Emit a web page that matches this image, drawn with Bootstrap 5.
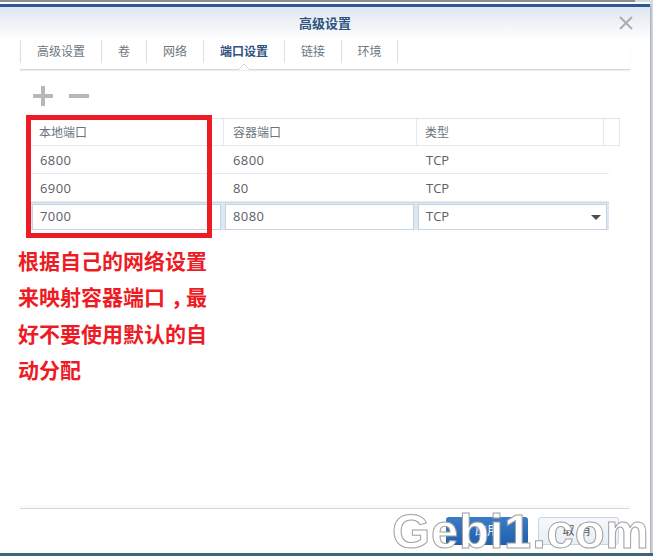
<!DOCTYPE html>
<html lang="zh">
<head>
<meta charset="utf-8">
<link href="https://cdn.jsdelivr.net/npm/bootstrap@5.3.0/dist/css/bootstrap.min.css" rel="stylesheet">
<style>
html,body{height:100%;}
body{margin:0;width:653px;height:556px;overflow:hidden;background:#d5dbe3;font-family:"Liberation Sans","Noto Sans CJK SC",sans-serif;font-size:12px;color:#505a64;position:relative;}
.top-edge{height:2px;background:#8a8d90;width:635px;}
.top-gap{height:2px;background:#fff;width:650px;}
.dlg{width:650px;height:549px;background:#fff;border-top:3px solid #2d5a8e;box-shadow:1px 1px 2px rgba(0,0,0,.25);}
.dlg-head{height:33px;background:linear-gradient(#dfe6f0,#fff);}
.dlg-title{font-size:13px;font-weight:700;color:#2f5380;padding-top:7px;}
.dlg-close{position:absolute;left:619px;top:16px;}
.tabbar{margin:0 20px;height:30px;border-bottom:1px solid #d5d8da;box-shadow:0 1px 1px #eee;position:relative;width:610px;}
.tabitem{height:23px;line-height:25px;text-align:center;border-left:1px solid #d7e1eb;color:#6c7680;font-size:12px;}
.tabitem.last{border-right:1px solid #d7e1eb;}
.tabitem.on{font-weight:700;color:#2f5380;}
.tab-notch{position:absolute;left:218px;bottom:-1px;width:12px;height:7px;}
.toolrow{margin:16px 0 0 33px;height:20px;gap:16px;}
.grid{margin:12px 0 0 28px;width:592px;}
.grow{height:28px;border-bottom:1px solid #e4ebf2;}
.grow.hd{height:28px;border-top:1px solid #dce4ec;}
.gcell{line-height:29px;color:#5a6068;font-family:"Open Sans","Noto Sans CJK SC",sans-serif;font-size:13px;}
.hd .gcell{border-right:1px solid #e2e9f0;font-family:"Liberation Sans","Noto Sans CJK SC",sans-serif;font-size:12px;line-height:28px;color:#6a7480;}
.num{letter-spacing:.4px;}
.c1{width:196px;padding-left:12px;}.c2{width:193px;padding-left:9px;}.c3{width:187px;padding-left:9px;}.c4{width:16px;}
.hd .c1{padding-left:11px;}.hd .c3{padding-left:8px;}
.edit-row{width:581px;height:28px;background:#d9e7f6;padding:1px 2px 1px 4px;gap:4px;border-top:1px solid #d0dae4;}
.edit-box{background:#fff;border:1px solid #c9d3de;height:26px;line-height:23px;padding-left:7px;width:189px;color:#5a6068;font-family:"Open Sans",sans-serif;font-size:13px;position:relative;}
.caret-d{position:absolute;right:5px;top:10px;width:0;height:0;border-left:5px solid transparent;border-right:5px solid transparent;border-top:5px solid #4b5058;}
.redbox{position:absolute;left:26px;top:115px;width:186px;height:123px;border:5px solid #ed1c24;}
.note{margin:12px 0 0 18px;width:210px;color:#ed1c24;font-weight:700;font-size:21px;line-height:36.4px;font-family:"Noto Sans CJK SC",sans-serif;}
.comma{display:inline-block;transform:translateX(6px);}
.foot{position:absolute;left:20px;top:508px;width:610px;border-top:1px solid #d5d8da;box-shadow:0 -2px 2px #f0f0f0;}
.btn-apply{position:absolute;left:446px;top:517px;width:82px;height:28px;background:linear-gradient(#3a7cc8,#1f5fab);border-radius:3px;color:#fff;text-align:center;line-height:28px;}
.btn-cancel{position:absolute;left:538px;top:517px;width:81px;height:28px;background:linear-gradient(#f6f9fc,#e6eef6);border:1px solid #c9d5e2;border-radius:3px;text-align:center;line-height:26px;color:#555;letter-spacing:4px;}
.bottom-strip{position:absolute;left:0;top:553px;width:653px;height:3px;background:#3d6670;}
.wm{position:absolute;left:392px;top:501px;font-family:"Liberation Sans",sans-serif;font-weight:700;font-size:49px;line-height:60px;color:#fff;-webkit-text-stroke:1px #a0a0a0;letter-spacing:.8px;white-space:nowrap;}
</style>
</head>
<body>
<div class="top-edge"></div>
<div class="top-gap"></div>
<div class="dlg">
  <div class="dlg-head text-center"><div class="dlg-title">高级设置</div></div>
  <div class="tabbar d-flex">
    <div class="tabitem" style="width:81px">高级设置</div>
    <div class="tabitem" style="width:45px">卷</div>
    <div class="tabitem" style="width:57px">网络</div>
    <div class="tabitem on" style="width:81px">端口设置</div>
    <div class="tabitem" style="width:57px">链接</div>
    <div class="tabitem last" style="width:57px">环境</div>
    <svg class="tab-notch" viewBox="0 0 12 7"><path d="M0 7 L6 1 L12 7" fill="#fff" stroke="#d5d8da"/></svg>
  </div>
  <div class="toolrow d-flex align-items-center">
    <svg width="20" height="20" viewBox="0 0 20 20"><path d="M8 0h4v8h8v4h-8v8h-4v-8h-8v-4h8z" fill="#b5b9be"/></svg>
    <svg width="20" height="20" viewBox="0 0 20 20"><rect x="0" y="8" width="20" height="4" fill="#b5b9be"/></svg>
  </div>
  <div class="grid">
    <div class="grow hd d-flex"><div class="gcell c1">本地端口</div><div class="gcell c2">容器端口</div><div class="gcell c3">类型</div><div class="gcell c4"></div></div>
    <div class="grow d-flex" style="width:581px"><div class="gcell c1 num">6800</div><div class="gcell c2 num">6800</div><div class="gcell c3">TCP</div></div>
    <div class="grow d-flex" style="width:581px"><div class="gcell c1 num">6900</div><div class="gcell c2 num">80</div><div class="gcell c3">TCP</div></div>
    <div class="edit-row d-flex">
      <div class="edit-box num">7000</div><div class="edit-box num">8080</div><div class="edit-box">TCP<span class="caret-d"></span></div>
    </div>
  </div>
  <div class="note">根据自己的网络设置<br>来映射容器端口<span class="comma">，</span>最<br>好不要使用默认的自<br>动分配</div>
</div>
<svg class="dlg-close" width="14" height="14" viewBox="0 0 14 14"><path d="M1 1L13 13M13 1L1 13" stroke="#a9aeb3" stroke-width="2"/></svg>
<div class="redbox"></div>
<div class="foot"></div>
<div class="btn-apply">应用</div>
<div class="btn-cancel">取消</div>
<div class="bottom-strip"></div>
<div class="wm">Gebi1.com</div>
<script src="https://cdn.jsdelivr.net/npm/bootstrap@5.3.0/dist/js/bootstrap.bundle.min.js"></script>
</body>
</html>
